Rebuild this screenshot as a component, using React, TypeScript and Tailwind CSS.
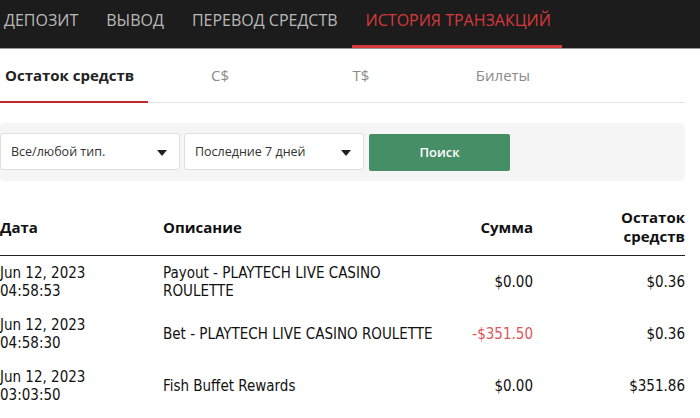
import React from "react";

const rows = [
  { date: "Jun 12, 2023", time: "04:58:53", desc: "Payout - PLAYTECH LIVE CASINO ROULETTE", amount: "$0.00", neg: false, bal: "$0.36" },
  { date: "Jun 12, 2023", time: "04:58:30", desc: "Bet - PLAYTECH LIVE CASINO ROULETTE", amount: "-$351.50", neg: true, bal: "$0.36" },
  { date: "Jun 12, 2023", time: "03:03:50", desc: "Fish Buffet Rewards", amount: "$0.00", neg: false, bal: "$351.86" },
];

function Caret() {
  return (
    <svg width="10" height="6" viewBox="0 0 10 6" className="shrink-0">
      <path d="M0 0 L10 0 L5 6 Z" fill="#222" />
    </svg>
  );
}

export default function App() {
  const sans = { fontFamily: '"Open Sans", "Noto Sans", sans-serif' };
  const body = { fontFamily: '"DejaVu Sans Condensed", "DejaVu Sans", sans-serif' };
  return (
    <div className="w-[700px] h-[418px] overflow-hidden bg-white" style={sans}>
      {/* top nav */}
      <div className="h-[49px] bg-[#1c1c1c] border-b border-[#9a9a9a] flex items-stretch">
        <div className="flex items-stretch -ml-[10px]">
          {["ДЕПОЗИТ", "ВЫВОД", "ПЕРЕВОД СРЕДСТВ"].map((t) => (
            <div key={t} className="px-[14px] flex items-center pb-[8px] text-[16px] text-[#b9b9b9]">
              {t}
            </div>
          ))}
          <div className="pl-[14px] pr-[11px] flex items-center pb-[5px] text-[16px] text-[#d8393b] border-b-[3px] border-[#d8393b]">
            ИСТОРИЯ ТРАНЗАКЦИЙ
          </div>
        </div>
      </div>

      <div className="w-[685px]">
        {/* tabs */}
        <div className="flex h-[54px] border-b border-[#e3e3e3]">
          <div className="w-[148px] pl-[5px] flex items-center text-[15px] font-bold text-[#222] border-b-2 border-[#c8262a] -mb-px">
            Остаток средств
          </div>
          <div className="w-[144px] flex items-center justify-center text-[15px] text-[#8a8a8a]">C$</div>
          <div className="w-[138px] flex items-center justify-center text-[15px] text-[#8a8a8a]">T$</div>
          <div className="w-[146px] flex items-center justify-center text-[15px] text-[#8a8a8a]">Билеты</div>
        </div>

        {/* filters */}
        <div className="mt-[20px] h-[58px] bg-[#f5f5f5] rounded-[4px] flex items-start pt-[10px] gap-[4px]">
          <div className="w-[180px] h-[37px] bg-white border border-[#dedede] rounded-[3px] flex items-center justify-between pl-[10px] pr-[12px] pt-[2px] text-[12.5px] text-[#333]">
            <span>Все/любой тип.</span>
            <Caret />
          </div>
          <div className="w-[180px] h-[37px] bg-white border border-[#dedede] rounded-[3px] flex items-center justify-between pl-[10px] pr-[12px] pt-[2px] text-[12.5px] text-[#333]">
            <span>Последние 7 дней</span>
            <Caret />
          </div>
          <div className="ml-[1px] mt-px w-[141px] h-[37px] bg-[#468f66] rounded-[2px] flex items-center justify-center text-[13px] font-semibold text-white">
            Поиск
          </div>
        </div>

        {/* table */}
        <table className="mt-[19px] w-[685px] border-collapse table-fixed">
          <colgroup>
            <col className="w-[163px]" />
            <col className="w-[290px]" />
            <col className="w-[80px]" />
            <col className="w-[152px]" />
          </colgroup>
          <thead>
            <tr className="border-b border-[#222]">
              <th className="text-left align-middle pt-[8px] pb-[9px] text-[15px] font-bold text-[#111] leading-[19px]">Дата</th>
              <th className="text-left align-middle pt-[8px] pb-[9px] text-[15px] font-bold text-[#111] leading-[19px]">Описание</th>
              <th className="text-right align-middle pt-[8px] pb-[9px] text-[15px] font-bold text-[#111] leading-[19px]">Сумма</th>
              <th className="text-right align-middle pt-[8px] pb-[9px] text-[15px] font-bold text-[#111] leading-[19px]">
                Остаток
                <br />
                средств
              </th>
            </tr>
          </thead>
          <tbody style={body}>
            {rows.map((r, i) => (
              <tr key={i}>
                <td className="align-middle py-[8px] text-[15px] leading-[18px] text-[#111]">
                  {r.date}
                  <br />
                  {r.time}
                </td>
                <td className="align-middle py-[8px] pr-[8px] text-[15px] leading-[18px] text-[#111]">{r.desc}</td>
                <td className={"align-middle py-[8px] text-right text-[15px] leading-[18px] " + (r.neg ? "text-[#e0575a]" : "text-[#111]")}>
                  {r.amount}
                </td>
                <td className="align-middle py-[8px] text-right text-[15px] leading-[18px] text-[#111]">{r.bal}</td>
              </tr>
            ))}
          </tbody>
        </table>
      </div>
    </div>
  );
}
